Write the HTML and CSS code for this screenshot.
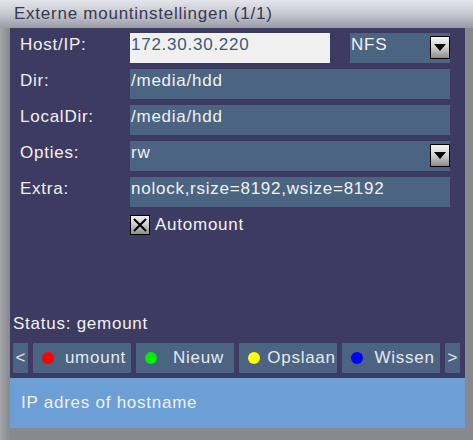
FILE: index.html
```html
<!DOCTYPE html>
<html>
<head>
<meta charset="utf-8">
<link rel="stylesheet" href="styles.css">
</head>
<body>
<div class="screen">
  <div class="titlebar">Externe mountinstellingen (1/1)</div>
  <div class="panel">
    <div class="form">
      <div class="label">Host/IP:</div>
      <div class="hostrow">
        <div class="field input">172.30.30.220</div>
        <div class="field select">NFS<span class="arrow"><svg width="12" height="8" viewBox="0 0 12 8"><path d="M0 0 L12 0 L6 7 Z" fill="#000"/></svg></span></div>
      </div>
      <div class="label">Dir:</div>
      <div class="field">/media/hdd</div>
      <div class="label">LocalDir:</div>
      <div class="field">/media/hdd</div>
      <div class="label">Opties:</div>
      <div class="field select">rw<span class="arrow"><svg width="12" height="8" viewBox="0 0 12 8"><path d="M0 0 L12 0 L6 7 Z" fill="#000"/></svg></span></div>
      <div class="label">Extra:</div>
      <div class="field">nolock,rsize=8192,wsize=8192</div>
      <div class="label"></div>
      <div class="check"><span class="box"><svg width="18" height="18" viewBox="0 0 18 18"><path d="M3 3 L15 15 M15 3 L3 15" stroke="#000" stroke-width="2"/></svg></span>Automount</div>
    </div>
    <div class="spacer"></div>
    <div class="status">Status: gemount</div>
    <div class="buttons">
      <div class="btn nav">&lt;</div>
      <div class="btn"><span class="dot red"></span><span class="txt">umount</span></div>
      <div class="btn"><span class="dot green"></span><span class="txt">Nieuw</span></div>
      <div class="btn"><span class="dot yellow"></span><span class="txt">Opslaan</span></div>
      <div class="btn"><span class="dot blue"></span><span class="txt">Wissen</span></div>
      <div class="btn nav">&gt;</div>
    </div>
    <div class="help">IP adres of hostname</div>
  </div>
</div>
</body>
</html>
```

FILE: styles.css
```css
html, body {
  margin: 0;
  padding: 0;
}
body {
  width: 473px;
  height: 440px;
  overflow: hidden;
  background: #88888f;
  font-family: "Liberation Sans", Arial, sans-serif;
  font-size: 17px;
  letter-spacing: 0.75px;
}
.screen {
  width: 473px;
  height: 440px;
  display: flex;
  flex-direction: column;
  background: linear-gradient(to right, #a4a4ac 0px, #88888f 10px);
}
.titlebar {
  height: 28px;
  box-sizing: border-box;
  padding: 3px 0 0 14px;
  line-height: 22px;
  color: #383850;
  background: linear-gradient(to bottom, #e4e4ec 0%, #c8c8d2 50%, #9a9aa6 100%);
}
.panel {
  margin-left: 10px;
  width: 455px;
  height: 400px;
  background: #3d3b61;
  display: flex;
  flex-direction: column;
}
.form {
  display: grid;
  grid-template-columns: 110px 320px;
  row-gap: 6px;
  padding: 5px 0 0 10px;
}
.label {
  color: #f2f2f4;
  line-height: 20px;
  padding-top: 2px;
  height: 30px;
  box-sizing: border-box;
}
.field {
  height: 30px;
  box-sizing: border-box;
  background: #4a6482;
  color: #f2f2f4;
  line-height: 20px;
  padding: 2px 0 0 1px;
  position: relative;
  white-space: nowrap;
}
.hostrow {
  display: flex;
  gap: 20px;
}
.hostrow .input {
  width: 200px;
  background: #f0f0f0;
  color: #3c5878;
}
.hostrow .select {
  width: 100px;
}
.arrow {
  position: absolute;
  right: 0;
  top: 3px;
  width: 20px;
  height: 23px;
  box-sizing: border-box;
  border: 1px solid #000;
  background: linear-gradient(to bottom, #f4f4f4 0%, #d0d0d0 50%, #8c8c8c 100%);
  display: flex;
  align-items: center;
  justify-content: center;
}
.check {
  display: flex;
  align-items: center;
  gap: 5px;
  height: 20px;
  margin-top: 2px;
  color: #f2f2f4;
  line-height: 20px;
}
.box {
  width: 20px;
  height: 20px;
  box-sizing: border-box;
  border: 1px solid #000;
  background: linear-gradient(to bottom, #f0f0f0 0%, #c8c8c8 50%, #8c8c8c 100%);
  display: flex;
  align-items: center;
  justify-content: center;
}
.spacer {
  flex: 1;
}
.status {
  color: #f2f2f4;
  padding-left: 3px;
  line-height: 20px;
  margin-bottom: 9px;
}
.buttons {
  display: flex;
  gap: 5px;
  padding: 0 3px;
  height: 30px;
  margin-bottom: 5px;
}
.btn {
  background: #4a6482;
  color: #e8e8f0;
  display: flex;
  align-items: center;
  width: 98px;
  box-sizing: border-box;
  padding-left: 9px;
  white-space: nowrap;
}
.btn.nav {
  width: 15px;
  padding: 0;
  justify-content: center;
  letter-spacing: 0;
}
.dot {
  width: 12px;
  height: 12px;
  border-radius: 50%;
  flex: none;
}
.red { background: #ff0000; }
.green { background: #00ee00; }
.yellow { background: #ffff00; }
.blue { background: #0000ff; }
.txt {
  flex: 1;
  text-align: center;
  padding-left: 6px;
}
.help {
  height: 50px;
  background: #6b9fd6;
  color: #eef2f8;
  padding-left: 11px;
  line-height: 50px;
}
```
